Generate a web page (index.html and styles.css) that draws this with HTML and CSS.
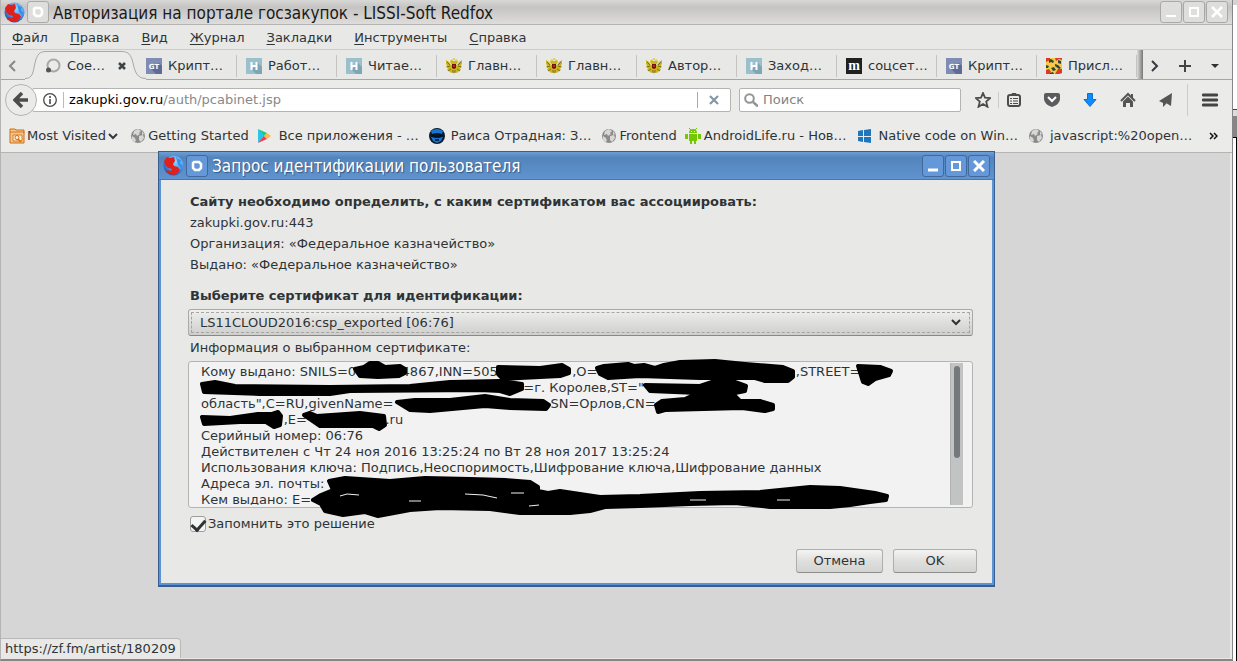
FILE: index.html
```html
<!DOCTYPE html>
<html lang="ru">
<head>
<meta charset="utf-8">
<title>Авторизация на портале госзакупок - LISSI-Soft Redfox</title>
<link rel="stylesheet" href="styles.css">
</head>
<body>
<svg class="defs" aria-hidden="true">
  <defs>
    <radialGradient id="globe" cx="60%" cy="30%" r="70%"><stop offset="0" stop-color="#8fd4ff"/><stop offset=".6" stop-color="#4b9ff0"/><stop offset="1" stop-color="#1657b8"/></radialGradient>
    <symbol id="fox" viewBox="0 0 21 21">
      <circle cx="10.500" cy="10.500" r="10" fill="url(#globe)"/>
      <path d="M13 1l2 3 3 1-1 3 3 4-2 1-3-3-1-4z" fill="#3b8ce6"/>
      <path d="M1 6l3-4 3 1 4-1 1 4-2 3 1 2 4 1 2 3-2 3-4 2-5-1-3-2 1-2 4 1 1-2-4-1-3-3z" fill="#e0201b"/>
    </symbol>
    <symbol id="ring" viewBox="0 0 12 12"><path d="M3 2h5l2 2v4l-2 2H4L2 8V3z" fill="none" stroke="currentColor" stroke-width="2.500"/></symbol>
    <symbol id="gt" viewBox="0 0 16 16"><path fill="#7f8db5" d="M0 0h16v16H0z"/><path fill="#5f6b94" d="M4 10l9-5 3 3v8h-6z"/><text x="8" y="11" class="logo-small">GT</text></symbol>
    <symbol id="habr" viewBox="0 0 16 16"><path fill="#9bc0cd" d="M0 0h16v16H0z"/><path fill="#7fa6b5" d="M6 12l5-8 5 5v7h-6z"/><path d="M5.500 4v8M10.500 4v8M5 8h6" stroke="#fff" stroke-width="2"/></symbol>
    <symbol id="eagle" viewBox="0 0 16 16">
      <path d="M0 2l3 2 2 3h1L4 4l2-3 1 2h2l1-2 2 3-2 3h1l2-3 3-2v4l-1 1 1 2-2 1 1 2-2 1-2 2-2-1-1 2-1-2-2 1-2-2-2-1 1-2-2-1 1-2-1-1z" fill="#c9b51c"/>
      <path d="M1 4l3 3M15 4l-3 3M4 8L1 9M12 8l3 1M5 11l-3 2M11 11l3 2M7 12v3M9 12v3" stroke="#7c701b"/>
      <path d="M7 0h2v2H7zM4 2h2v1H4zM10 2h2v1h-2z" fill="#e0d05c"/>
      <path d="M6 6h4v4l-2 1-2-1z" fill="#6e1410"/><path d="M7 7h2v2H7z" fill="#d31a1a"/>
    </symbol>
    <symbol id="meta" viewBox="0 0 16 16"><path fill="#202020" d="M0 0h16v16H0z"/><text x="8" y="12" class="logo-serif">m</text></symbol>
    <symbol id="dots" viewBox="0 0 16 16"><rect width="16" height="16" rx="2" fill="#f7c944"/><path d="M0 0h4v2L0 4zM9 0h7v2l-3-1-3 2zM0 12l3-1 2 3-1 2H0zM12 11h4v4l-3 1H9z" fill="#da3a27"/><path d="M3 2l2-1 3 2-1 2-2-1-2 1zM12 2l3 1v3l-3-1zM0 7l3 1-1 2H0zM9 6l3 1 3 3-2 1-4-3zM5 10l3-1 2 3-3 1zM4 15l3-1 1 2H4z" fill="#30453c"/></symbol>
    <symbol id="world" viewBox="0 0 16 16"><circle cx="8" cy="8" r="7" fill="#8b8b8b"/><path d="M4 3l4-2 3 2-2 2 1 1-3 2-1-2-3 1zM9 8l4-1 1 3-3 4-2-2zM2 8l3 2 1 3-2 1-2-2z" fill="#d7d7d6"/><path d="M12 3l2 3-2 1z" fill="#d7d7d6"/></symbol>
  </defs>
</svg>

<div class="desktop">
<div class="window">
  <header class="titlebar">
    <svg class="fox"><use href="#fox"/></svg>
    <button class="tbtn" aria-label="Меню окна"><svg width="12" height="12"><use href="#ring"/></svg></button>
    <h1 class="title">Авторизация на портале госзакупок - LISSI-Soft Redfox</h1>
    <div class="tgroup">
      <button class="tbtn" aria-label="Свернуть"><svg width="12" height="12"><path d="M1 10h10" stroke="currentColor" stroke-width="2"/></svg></button>
      <button class="tbtn" aria-label="Развернуть"><svg width="12" height="12"><path d="M2 2h8v8H2z" fill="none" stroke="currentColor" stroke-width="2"/></svg></button>
      <button class="tbtn" aria-label="Закрыть"><svg width="12" height="12"><path d="M1 1l10 10M11 1L1 11" stroke="currentColor" stroke-width="2.500"/></svg></button>
    </div>
  </header>

  <nav class="menu">
    <a href="#"><u>Ф</u>айл</a><a href="#"><u>П</u>равка</a><a href="#"><u>В</u>ид</a><a href="#"><u>Ж</u>урнал</a><a href="#"><u>З</u>акладки</a><a href="#"><u>И</u>нструменты</a><a href="#"><u>С</u>правка</a>
  </nav>

  <div class="tabs">
    <button class="scroll-left" aria-label="Назад"><svg width="8" height="12"><path d="M7 1L2 6l5 5" fill="none" stroke="#888" stroke-width="2"/></svg></button>
    <div class="tab active">
      <svg class="shape" viewBox="0 0 122 30"><path d="M0 30V28.500C8 28.500 8 22 10 13C12 4 15 1.500 21 1.500H96C103 1.500 106 4 108 13C110 22 112 28.500 121 28.500V30z" fill="#ebebe9"/><path d="M0 28.500C8 28.500 8 22 10 13C12 4 15 1.500 21 1.500H96C103 1.500 106 4 108 13C110 22 112 28.500 121 28.500" fill="none" stroke="#a3a8b1"/></svg>
      <svg class="ico" viewBox="0 0 16 16"><circle cx="8.500" cy="7.500" r="6" fill="none" stroke="#a8a8a8" stroke-width="2"/><circle cx="3.500" cy="12" r="2.500" fill="#555"/></svg>
      <span>Сое…</span>
      <button class="close" aria-label="Закрыть вкладку"><svg width="8" height="8"><path d="M1 1l6 6M7 1L1 7" stroke="#3e4346" stroke-width="2.500"/></svg></button>
    </div>
    <div class="tab"><svg class="ico"><use href="#gt"/></svg><span>Крипт…</span></div>
    <div class="tab"><svg class="ico"><use href="#habr"/></svg><span>Работ…</span></div>
    <div class="tab"><svg class="ico"><use href="#habr"/></svg><span>Читае…</span></div>
    <div class="tab"><svg class="ico"><use href="#eagle"/></svg><span>Главн…</span></div>
    <div class="tab"><svg class="ico"><use href="#eagle"/></svg><span>Главн…</span></div>
    <div class="tab"><svg class="ico"><use href="#eagle"/></svg><span>Автор…</span></div>
    <div class="tab"><svg class="ico"><use href="#habr"/></svg><span>Заход…</span></div>
    <div class="tab"><svg class="ico"><use href="#meta"/></svg><span>соцсет…</span></div>
    <div class="tab"><svg class="ico"><use href="#gt"/></svg><span>Крипт…</span></div>
    <div class="tab"><svg class="ico"><use href="#dots"/></svg><span>Присл…</span></div>
    <div class="fade"></div>
    <div class="tab-tools">
      <button aria-label="Вперёд"><svg width="8" height="12"><path d="M1 1l5 5-5 5" fill="none" stroke="#333b40" stroke-width="2"/></svg></button>
      <button aria-label="Новая вкладка"><svg width="12" height="12"><path d="M6 0v12M0 6h12" stroke="#444" stroke-width="2"/></svg></button>
      <button aria-label="Список вкладок"><svg width="8" height="4"><path d="M0 0h8L4 4z" fill="#2e3436"/></svg></button>
    </div>
  </div>

  <div class="nav">
    <button class="back" aria-label="Назад"><svg width="16" height="16"><path d="M9 1L2 8l7 7M3 8h12" fill="none" stroke="#4c4c4c" stroke-width="3.500"/></svg></button>
    <div class="address">
      <svg width="14" height="14" viewBox="0 0 14 14"><circle cx="7" cy="7" r="6.300" fill="none" stroke="#4a4a4a" stroke-width="1.300"/><path d="M7 6v5M7 3v2" stroke="#4a4a4a" stroke-width="1.600"/></svg>
      <label class="url" for="url"><b>zakupki.gov.ru</b>/auth/pcabinet.jsp</label>
      <input id="url" class="url-input" type="text">
      <button class="stop" aria-label="Остановить"><svg width="10" height="10"><path d="M1 1l8 8M9 1L1 9" stroke="#8595a8" stroke-width="2.200"/></svg></button>
    </div>
    <div class="search">
      <svg width="14" height="14"><circle cx="5.500" cy="5.500" r="4.300" fill="none" stroke="#949494" stroke-width="2"/><path d="M9 9l5 4.500" stroke="#949494" stroke-width="2.500"/></svg>
      <input type="text" placeholder="Поиск" aria-label="Поиск">
    </div>
    <div class="tools">
      <button aria-label="Закладка"><svg width="16" height="16" viewBox="0 0 16 16"><path d="M8 1l2 4.700 5.200.4-4 3.500 1.300 5.200L8 12l-4.500 2.800 1.300-5.200-4-3.500L6 5.700z" fill="none" stroke="#4c4c4c" stroke-width="1.800"/></svg></button>
      <button class="lined" aria-label="Список"><svg width="16" height="16" viewBox="0 0 16 16"><rect x="2" y="3" width="12" height="11" rx="2" fill="none" stroke="#4c4c4c" stroke-width="2"/><path d="M5 3l1-2h4l1 2z" fill="#4c4c4c"/><path d="M4 6.500h2m1 0h5M4 9h2m1 0h5M4 11.500h2m1 0h5" stroke="#4c4c4c"/></svg></button>
      <button aria-label="Pocket"><svg width="16" height="16"><path d="M2 1h12q2 0 2 2v4q0 5-8 8Q0 12 0 7V3q0-2 2-2z" fill="#5b5b5d"/><path d="M4 5l4 4 4-4" fill="none" stroke="#fff" stroke-width="2"/></svg></button>
      <button aria-label="Загрузки"><svg width="16" height="16"><path d="M5.500 1.500h5v6H14L8 14.500 2 7.500h3.500z" fill="#0e8cff" stroke="#0b6fd0"/></svg></button>
      <button aria-label="Домой"><svg width="16" height="16"><path d="M1 9l7-7 7 7" fill="none" stroke="#555" stroke-width="2"/><path d="M11 2h2v4h-2zM8 4.500l5 5V15h-3v-4H6v4H3V9.500z" fill="#555"/></svg></button>
      <button aria-label="Отправить"><svg width="16" height="16"><path d="M14 1L1 9l4 2zM14 1L5 11v4l3-3zM14 1L8 11l5 3z" fill="#555"/></svg></button>
      <button class="burger" aria-label="Меню"><svg width="16" height="14"><path d="M1 2h14M1 7h14M1 12h14" stroke="#444" stroke-width="2.800" stroke-linecap="round"/></svg></button>
    </div>
  </div>

  <div class="bookmarks">
    <a href="#" class="tight"><svg class="ico" viewBox="0 0 16 16"><path d="M1 3V1h5l1 1h8v3M1 3v12h14V4H1" fill="#f5c78d" stroke="#cf6d13"/><path d="M4 7h9v6H4z" fill="#fff0d8" stroke="#d9781f"/><circle cx="8" cy="9.500" r="2" fill="none" stroke="#cf6d13"/><path d="M9 11l3 3" stroke="#cf6d13" stroke-width="1.500"/></svg><span>Most Visited</span><svg width="10" height="8"><path d="M1 2l4 4 4-4" fill="none" stroke="#333b40" stroke-width="2"/></svg></a>
    <a href="#" class="tight"><svg class="ico"><use href="#world"/></svg><span>Getting Started</span></a>
    <a href="#"><svg class="ico" viewBox="0 0 16 16"><path d="M1 1l7 7-7 7z" fill="#29c6e8"/><path d="M1 1l9 4-3 3z" fill="#24c77c"/><path d="M1 15l9-4-3-3z" fill="#ef3d5b"/><path d="M10 5l4 3-4 3-3-3z" fill="#ffb64a"/></svg><span>Все приложения - …</span></a>
    <a href="#"><svg class="ico" viewBox="0 0 16 16"><circle cx="8" cy="8" r="8" fill="#0a1a2b"/><path d="M2 3q6-4 12 0l-1 3q-5-2-10 0zM2 9l5 1h2l5-1-2 4-4 2-4-2z" fill="#1577d2"/><path d="M3 7l4 2M13 7L9 9M6 12h4" stroke="#051020" stroke-width="1.500"/></svg><span>Раиса Отрадная: З…</span></a>
    <a href="#" class="tight"><svg class="ico"><use href="#world"/></svg><span>Frontend</span></a>
    <a href="#" class="droid"><svg class="ico" viewBox="0 0 16 16"><path d="M4 5q0-4 4-4t4 4zM4 6h8v7H4zM0 6h3v5H0zM13 6h3v5h-3zM5 12h2v4H5zM9 12h2v4H9z" fill="#74c703"/><path d="M4 0l2 2M12 0l-2 2" stroke="#74c703"/><path d="M6 3h1v1H6zM9 3h1v1H9z" fill="#fff"/></svg><span>AndroidLife.ru - Нов…</span></a>
    <a href="#"><svg class="ico" viewBox="0 0 16 16"><path d="M1 3l5-1v6H1zM7 2l7-1v7H7zM1 9h5v5l-5-1zM7 9h7v6l-7-1z" fill="#1f76bd"/></svg><span>Native code on Win…</span></a>
    <a href="#"><svg class="ico"><use href="#world"/></svg><span>javascript:%20open…</span></a>
    <button class="more" aria-label="Другие закладки"><svg width="9" height="8"><path d="M1 1l3 3-3 3M5 1l3 3-3 3" fill="none" stroke="#111" stroke-width="1.500"/></svg></button>
  </div>

  <main class="page"><div class="status">https://zf.fm/artist/180209</div></main>
</div>

<div class="behind"><i class="b-top"></i><i class="b-bar"></i><i class="b-body"></i></div>

<section class="dialog" role="dialog" aria-labelledby="dlg-title">
  <header class="dlg-title">
    <svg class="fox"><use href="#fox"/></svg>
    <button class="tbtn" aria-label="Меню окна"><svg width="12" height="12"><use href="#ring"/></svg></button>
    <h2 class="title" id="dlg-title">Запрос идентификации пользователя</h2>
    <div class="tgroup">
      <button class="tbtn" aria-label="Свернуть"><svg width="12" height="12"><path d="M1 10h10" stroke="currentColor" stroke-width="3"/></svg></button>
      <button class="tbtn" aria-label="Развернуть"><svg width="12" height="12"><path d="M2 2h8v8H2zM1 2h10" fill="none" stroke="currentColor" stroke-width="2"/></svg></button>
      <button class="tbtn" aria-label="Закрыть"><svg width="12" height="12"><path d="M1 1l10 10M11 1L1 11" stroke="currentColor" stroke-width="3"/></svg></button>
    </div>
  </header>
  <div class="dlg-body">
    <p class="strong">Сайту необходимо определить, с каким сертификатом вас ассоциировать:</p>
    <p>zakupki.gov.ru:443</p>
    <p>Организация: «Федеральное казначейство»</p>
    <p>Выдано: «Федеральное казначейство»</p>
    <label class="strong choose" for="cert">Выберите сертификат для идентификации:</label>
    <div class="select">
      <select id="cert"><option>LS11CLOUD2016:csp_exported [06:76]</option></select>
      <svg width="12" height="8"><path d="M2 1l4 4 4-4" fill="none" stroke="#2e3436" stroke-width="2"/></svg>
    </div>
    <label class="info-label" for="info">Информация о выбранном сертификате:</label>
    <div class="info">
      <textarea id="info" readonly>Кому выдано: SNILS=0           4867,INN=505                  ,O=                                                ,STREET=
                                                                              =г. Королев,ST="
область",C=RU,givenName=                                     ,SN=Орлов,CN=
                    ,E=                   .ru
Серийный номер: 06:76
Действителен с Чт 24 ноя 2016 13:25:24 по Вт 28 ноя 2017 13:25:24
Использования ключа: Подпись,Неоспоримость,Шифрование ключа,Шифрование данных
Адреса эл. почты:
Кем выдано: E=</textarea>
      <div class="track"><div class="thumb"></div></div>
      <svg class="marks" viewBox="188 355 785 165" aria-hidden="true">
        <path d="M355 369L364 367 370 363 378 363 385 367 400 366 405 369 405 373 399 376 378 377 360 376z"/>
        <path d="M498 367L540 368 562 365 569 369 569 373 560 376 520 378 503 379 498 374z"/>
        <path d="M597 368L604 366 628 364 634 366 644 365 655 368 664 365 680 362 715 361 745 364 783 367 793 371 793 377 788 381 765 381 755 378 700 378 640 376 608 378 600 374z"/>
        <path d="M858 366L880 367 891 371 889 375 875 379 868 384 863 382z"/>
        <path d="M202 384L215 382 235 386 330 387 410 386 450 382 500 381 522 384 522 389 510 394 500 391 480 390 350 391 330 394 260 394 204 392z"/>
        <path d="M645 385L700 386 712 382 735 382 746 386 745 391 735 393 730 391 740 401 760 401 773 405 773 409 765 411 742 408 665 410 658 412 656 405 662 401 685 399 698 393 650 391z"/>
        <path d="M397 402L415 400 450 400 485 396 510 400 543 401 549 405 546 409 510 408 485 406 430 411 410 410z"/>
        <path d="M202 417L230 418 258 414 272 414 278 412 281 416 280 425 274 427 266 422 240 422 204 424z"/>
        <path d="M304 415L310 413 317 416 360 413 384 416 385 425 379 429 373 426 320 426z"/>
        <path d="M329 481L345 478 390 481 425 478 470 479 505 480 530 482 538 487 538 491 548 493 560 491 600 497 640 496 700 493 760 492 810 487 840 488 875 493 887 496 886 500 870 502 850 505 830 507 770 507 735 503 690 504 640 506 605 507 590 511 570 513 520 513 490 509 440 508 410 510 378 516 365 512 343 515 325 511 321 504 313 500 321 495 333 490z"/>
        <path class="glint" d="M340 496l7-2 12 1M409 501h12M465 494l18 1 14 3M511 493h13M529 506l10-1M777 500h13M690 500h16"/>
      </svg>
    </div>
    <div class="remember"><input type="checkbox" id="rem" checked><label for="rem">Запомнить это решение</label></div>
    <div class="actions"><button class="push cancel">Отмена</button><button class="push ok">OK</button></div>
  </div>
</section>
</div>
</body>
</html>
```
FILE: styles.css
```css
* { box-sizing: border-box; }
body { margin: 0; font: 13px/16px "DejaVu Sans", sans-serif; color: #2e3436; background: #fff; }
button { font: inherit; color: inherit; border: 0; padding: 0; margin: 0; background: none; display: flex; align-items: center; justify-content: center; }
a { color: inherit; text-decoration: none; }
svg { flex: none; display: block; }
.defs { position: absolute; width: 0; height: 0; }
.logo-small { font: bold 7px "DejaVu Sans", sans-serif; fill: #fff; text-anchor: middle; }
.logo-serif { font: bold 14px "Liberation Serif", serif; fill: #fff; text-anchor: middle; }
.ico { width: 16px; height: 16px; }

.desktop { position: relative; display: flex; min-height: 100vh; }
.window { flex: 1; min-width: 0; display: flex; flex-direction: column; border-left: 1px solid #b4b4b4; border-right: 1px solid #868686; border-bottom: 2px solid #868684; background: #e8e8e6; }
.behind { width: 4px; display: flex; flex-direction: column; background: #fff; }
.b-top { height: 110px; border-top: 5px solid #d3d3d2; border-bottom: 1px solid #444; }
.b-bar { height: 27px; background: #868686; border: solid #dcdcdb; border-width: 6px 0; border-bottom-color: #868686; }
.b-body { flex: 1; border-right: 1px solid #000; border-top: 1px solid #000; }

.titlebar { display: flex; align-items: center; height: 25px; padding: 0 4px 0 3px; background: linear-gradient(#d8d8d6, #c5c4c2 30%, #dedddb); border-bottom: 1px solid #b5b5b3; }
.fox { width: 21px; height: 21px; margin-right: 2px; }
.title { flex: 1; margin: 0 0 0 4px; padding-top: 1px; font: 17px/24px "DejaVu Sans Condensed", "DejaVu Sans", sans-serif; font-stretch: condensed; color: #1a1a1a; white-space: nowrap; overflow: hidden; }
.tbtn { width: 22px; height: 22px; border: 1px solid #a9a9a7; border-radius: 3px; background: #dededc; color: #fff; }
.tgroup { display: flex; gap: 1px; }

.menu { display: flex; gap: 22px; height: 25px; padding: 2px 11px 0; align-items: center; border-bottom: 1px solid #ccccca; }
.menu a { white-space: nowrap; }
.menu u { text-underline-offset: 2px; }

.tabs { display: flex; height: 30px; border-bottom: 1px solid #a6a6a6; padding-right: 2px; }
.scroll-left { width: 24px; padding: 2px 3px 0 0; }
.tab { flex: 0 1 100px; min-width: 0; display: flex; align-items: center; gap: 6px; padding: 2px 0 0 9px; white-space: nowrap; background: linear-gradient(#c4c4c2, #c4c4c2) right 5px / 1px 22px no-repeat; }
.tab.active { position: relative; flex-basis: 112px; padding-left: 20px; background: none; }
.tab.active > * { z-index: 1; }
.tab.active .close { margin-left: 7px; }
.tab.active .shape { z-index: 0; }
.shape { position: absolute; left: 0; top: 0; width: 122px; height: 30px; }
.fade { width: 6px; background: linear-gradient(90deg, #dededc, #777); }
.tab-tools { flex: 1; display: flex; align-items: center; justify-content: space-between; padding: 2px 11px 0 8px; }

.nav { display: flex; align-items: center; height: 40px; padding: 0 9px 0 4px; background: #ebebe9; }
.back { z-index: 1; width: 32px; height: 32px; flex: none; border: 1px solid #b4b4b2; border-radius: 50%; background: #ebebe9; }
.address { flex: 1 1 0; min-width: 0; display: flex; align-items: center; height: 24px; margin-left: -5px; padding-left: 10px; border: 1px solid #b4b4b2; border-radius: 2px; background: #fff; }
.url { margin-left: 6px; padding-left: 5px; border-left: 1px solid #bbb; color: #888; white-space: nowrap; }
.url b { font-weight: normal; color: #000; }
.url-input { flex: 1; min-width: 0; border: 0; padding: 0; background: none; }
.stop { width: 33px; height: 16px; border-left: 1px solid #aaa; }
.search { flex: 0 1 222px; min-width: 0; display: flex; align-items: center; gap: 5px; height: 24px; margin-left: 8px; padding: 0 4px; border: 1px solid #b4b4b2; border-radius: 2px; background: #fff; }
.search input { flex: 1; min-width: 0; border: 0; padding: 0; font: inherit; outline: 0; }
.search input::placeholder { color: #838383; opacity: 1; }
.tools { display: flex; align-items: center; gap: 22px; margin-left: 14px; }
.tools .lined { margin-left: -15px; padding-left: 7px; border-left: 1px solid #ccc; }
.tools .burger { height: 32px; margin-left: -9px; padding: 0 5px 0 14px; border-left: 1px solid #ccc; }

.bookmarks { display: flex; align-items: center; height: 33px; padding: 0 14px 0 8px; background: #ebebe9; border-bottom: 1px solid #b4b4b2; }
.bookmarks a { display: flex; align-items: center; gap: 6px; margin-right: 10px; white-space: nowrap; }
.bookmarks .tight { gap: 2px; margin-right: 8px; }
.bookmarks .tight:first-child { margin-right: 12px; }
.bookmarks .droid { gap: 3px; }
.more { margin-left: auto; }

.page { flex: 1; display: flex; align-items: flex-end; background: #d6d6d6; border-right: 2px solid #e8e8e6; border-bottom: 1px solid #e8e8e6; }
.status { padding: 2px 4px 1px; border: 1px solid #b9b9b5; border-left: 0; border-bottom: 0; border-radius: 0 4px 0 0; background: #e8e8e6; }

.dialog { position: absolute; left: 158px; right: 242px; top: 151px; background: #e8e8e6; border: solid #3a5f8f; border-width: 1px 1px 2px; box-shadow: inset 0 0 0 2px #5b93d5; padding: 0 2px 1px; }
.dlg-title { display: flex; align-items: center; height: 28px; margin: 0 -2px; padding: 0 4px; background: linear-gradient(#6d9fd6, #5384bb 20%, #6093cf); border-bottom: 1px solid #4a77ad; }
.dlg-title .title { color: #fff; text-shadow: 1px 1px 1px #35567f; }
.dlg-title .tbtn { border-color: #41699c; background: #6598d9; }
.dlg-body { display: flex; flex-direction: column; padding: 11px 15px 11px 29px; }
.dlg-body p { margin: 0; line-height: 21px; }
.strong { font-weight: bold; }
.choose { margin-top: 10px; line-height: 21px; }
.select { position: relative; display: flex; align-items: center; height: 27px; margin: 3px 4px 3px -2px; border: 1px solid #a9a9a7; border-bottom-color: #888; border-radius: 3px; background: linear-gradient(#f0f0ef, #dededc 50%, #cfcfcd); padding: 2px; }
.select select { flex: 1; height: 21px; appearance: none; border: 1px dashed #a5a5a3; background: none; font: inherit; color: inherit; padding: 0 8px; }
.select svg { position: absolute; right: 10px; }
.info-label { line-height: 17px; }
.info { position: relative; display: flex; height: 147px; margin: 5px 4px 0 -2px; padding: 1px 9px 2px 0; border: 1px solid #b4b4b2; border-radius: 3px; background: #f2f2f2; }
.info textarea { flex: 1; min-width: 0; resize: none; border: 0; outline: 0; padding: 1px 0 0 12px; background: none; font: inherit; color: inherit; white-space: pre; overflow: hidden; }
.track { width: 13px; padding: 3px 3px 0; border-left: 1px solid #b0b3b2; background: #c2c4c3; }
.thumb { height: 92px; border-radius: 3px; background: #747a7b; }
.marks { position: absolute; left: -1px; top: -7px; width: 785px; height: 165px; pointer-events: none; stroke: #000; stroke-width: 4; stroke-linejoin: round; }
.marks .glint { fill: none; stroke: #f2f2f2; stroke-width: 1; }
.remember { display: flex; align-items: center; gap: 2px; margin-top: 8px; }
.remember input { appearance: none; display: flex; justify-content: center; width: 16px; height: 16px; margin: 0; border: 1px solid #9d9d9b; border-radius: 3px; background: #f4f4f3; }
.remember input:checked::before { content: ""; width: 6px; height: 11px; border: solid #2e3436; border-width: 0 3px 3px 0; transform: rotate(42deg); }
.actions { display: flex; justify-content: flex-end; gap: 10px; margin-top: 17px; }
.push { height: 24px; border: 1px solid #adadab; border-bottom-color: #8d8d8b; border-radius: 3px; background: linear-gradient(#f4f4f3, #dfdfdd 50%, #d3d3d1); }
.cancel { width: 87px; }
.ok { width: 84px; }
```
